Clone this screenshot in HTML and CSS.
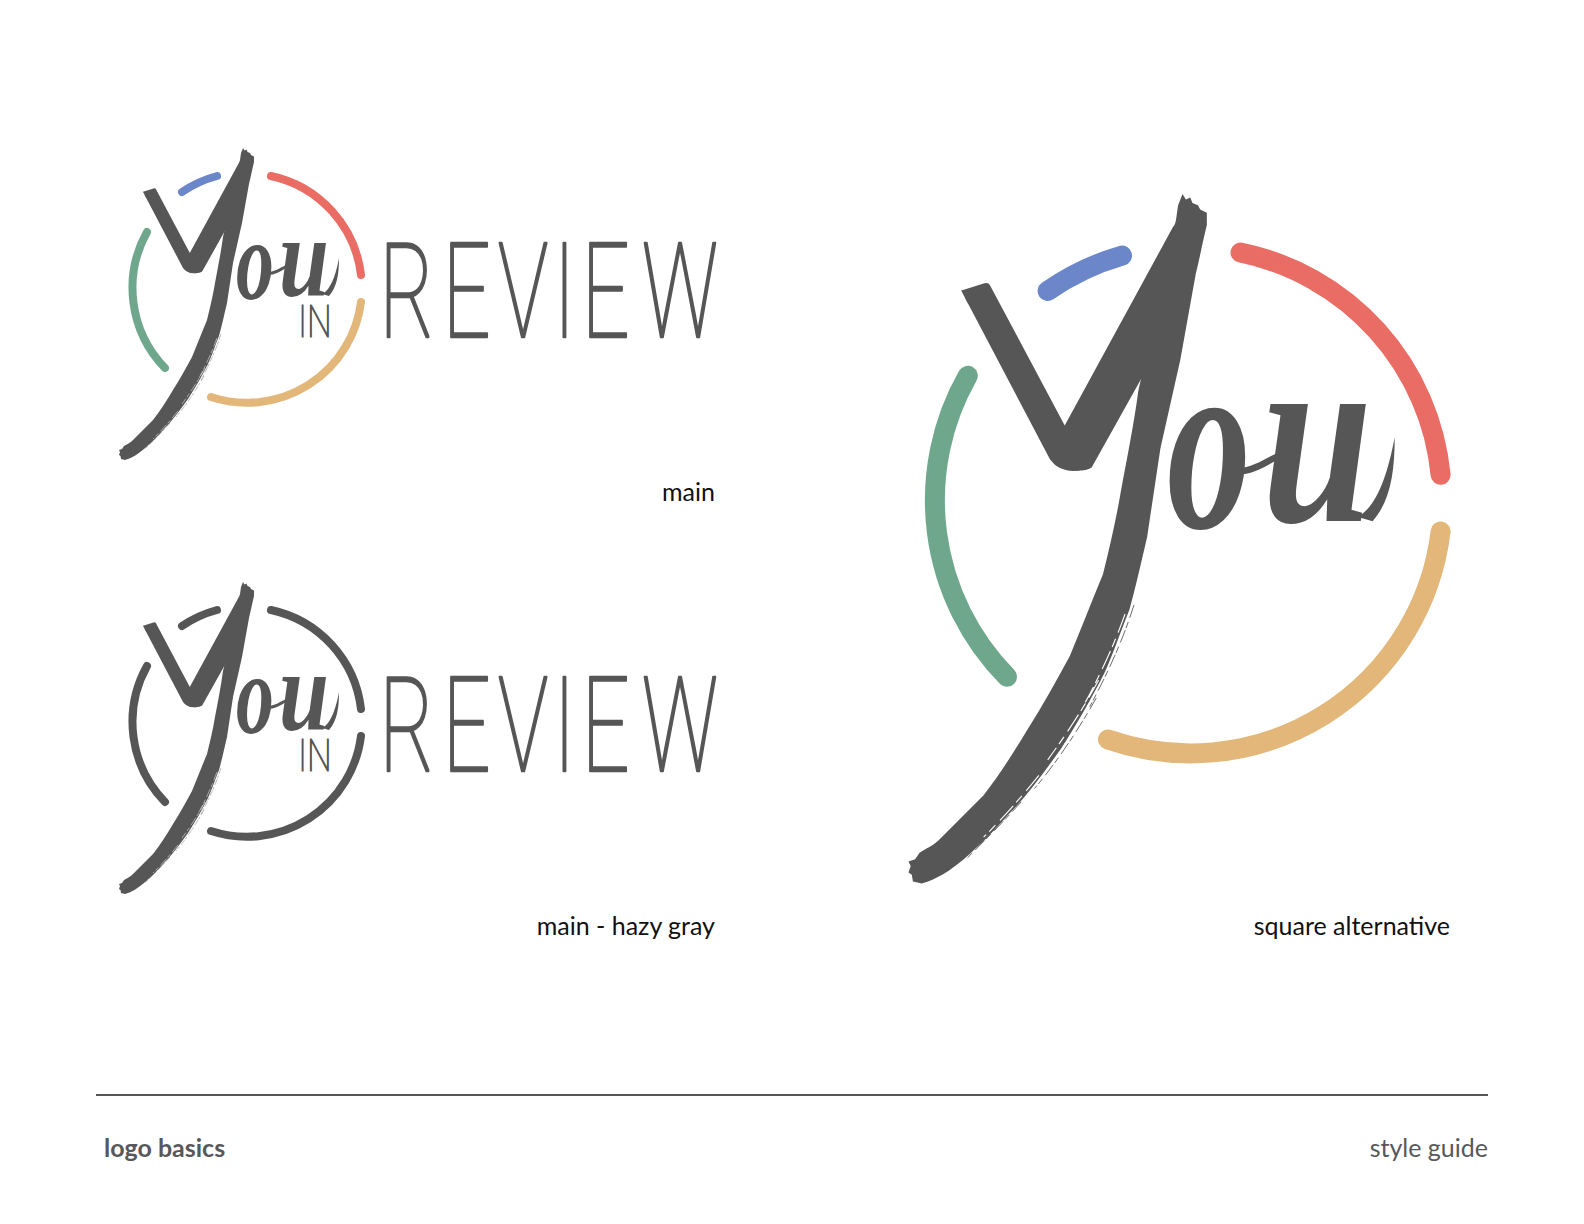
FILE: index.html
```html
<!DOCTYPE html>
<html lang="en">
<head>
<meta charset="utf-8">
<title>logo basics - style guide</title>
<link rel="stylesheet" href="styles.css">
</head>
<body>
<main class="page">
  <div class="board">
    <div class="col-left">
      <figure class="fig fig-main">
        <svg class="logo-wide" viewBox="116 140 604 325" role="img" aria-label="You in Review logo">
          <defs>
            <clipPath id="armclip1"><path d="M142 186L146 185L148 186L152 184.500L156 186L200 130H252V160L241 225L226 231L212 258C208 268 203 273 197 273C190 274 186 272 183 268L142 190Z"/></clipPath>
          </defs>
          <g class="ring thin">
            <path class="blue" d="M182 192A115 115 0 0 1 217 176"/>
            <path class="red" d="M271 176A115 115 0 0 1 361 275"/>
            <path class="gold" d="M361 302A115 115 0 0 1 211 397"/>
            <path class="green" d="M165 368A115 115 0 0 1 147 232"/>
          </g>
          <g class="mark">
            <g clip-path="url(#armclip1)"><text class="y-glyph" transform="matrix(2.107 -.667 -.248 2.49 109.700 371.700)">Y</text></g>
            <path class="swash" d="M243 148L244.500 150.500L246.500 149.500L247.500 152L250 153L251 155L254 156.500L254 162C252 170 251 176 249 184L242 223L233 263L227 303C224 316 222 325 219 336C215 346 212 355 208 364C202 376 195 388 188 399C180 410 173 420 164 429C158 436 151 443 144 449C138 454 132 458 125 460L121 459L120.500 456L119 455L120 452L119 450L122 449L124 446C127 444 130 443 133 440L153 420C160 411 167 400 173 390C180 379 186 368 192 357C197 345 202 332 207 320C210 308 213 295 215 283C218 267 221 252 223 237L225 228C228 213 230 198 233 183C235 175 238 168 240 160L241 153Z"/>
            <path class="scratch-dark" d="M221 334C216 350 209 365 201 380M204 376C196 390 187 404 176 417M170 423C162 432 153 441 145 449"/>
            <path class="scratch-light" d="M217 338C212 352 206 365 199 378M205 368C198 381 190 393 182 404M178 411C170 421 162 430 153 439"/>
            <text class="o-glyph" transform="translate(236 299) scale(.66 1)">o</text>
            <path class="swash" d="M268 272C274 272 280 268 286 265L286 268C280 272 274 275 268 275Z"/>
            <text class="u-glyph" transform="translate(279 296) scale(.78 1)">u</text>
            <path class="swash" d="M322 294C331 290 336 274 339 258C339 274 337 287 329 296Z"/>
            <text class="in-glyph" transform="translate(298 337) scale(.8 1)">IN</text>
          </g>
          <text class="review" transform="translate(0 337) scale(.64 1)" x="593 691.700 778 865 909 1003">REVIEW</text>
        </svg>
        <figcaption class="cap cap-main">main</figcaption>
      </figure>
      <figure class="fig">
        <svg class="logo-wide" viewBox="116 140 604 325" role="img" aria-label="You in Review logo, hazy gray">
          <g class="ring thin mono">
            <path d="M182 192A115 115 0 0 1 217 176"/>
            <path d="M271 176A115 115 0 0 1 361 275"/>
            <path d="M361 302A115 115 0 0 1 211 397"/>
            <path d="M165 368A115 115 0 0 1 147 232"/>
          </g>
          <g class="mark">
            <g clip-path="url(#armclip1)"><text class="y-glyph" transform="matrix(2.107 -.667 -.248 2.49 109.700 371.700)">Y</text></g>
            <path class="swash" d="M243 148L244.500 150.500L246.500 149.500L247.500 152L250 153L251 155L254 156.500L254 162C252 170 251 176 249 184L242 223L233 263L227 303C224 316 222 325 219 336C215 346 212 355 208 364C202 376 195 388 188 399C180 410 173 420 164 429C158 436 151 443 144 449C138 454 132 458 125 460L121 459L120.500 456L119 455L120 452L119 450L122 449L124 446C127 444 130 443 133 440L153 420C160 411 167 400 173 390C180 379 186 368 192 357C197 345 202 332 207 320C210 308 213 295 215 283C218 267 221 252 223 237L225 228C228 213 230 198 233 183C235 175 238 168 240 160L241 153Z"/>
            <path class="scratch-dark" d="M221 334C216 350 209 365 201 380M204 376C196 390 187 404 176 417M170 423C162 432 153 441 145 449"/>
            <path class="scratch-light" d="M217 338C212 352 206 365 199 378M205 368C198 381 190 393 182 404M178 411C170 421 162 430 153 439"/>
            <text class="o-glyph" transform="translate(236 299) scale(.66 1)">o</text>
            <path class="swash" d="M268 272C274 272 280 268 286 265L286 268C280 272 274 275 268 275Z"/>
            <text class="u-glyph" transform="translate(279 296) scale(.78 1)">u</text>
            <path class="swash" d="M322 294C331 290 336 274 339 258C339 274 337 287 329 296Z"/>
            <text class="in-glyph" transform="translate(298 337) scale(.8 1)">IN</text>
          </g>
          <text class="review" transform="translate(0 337) scale(.64 1)" x="593 691.700 778 865 909 1003">REVIEW</text>
        </svg>
        <figcaption class="cap">main - hazy gray</figcaption>
      </figure>
    </div>
    <figure class="fig fig-square">
      <svg class="logo-square" viewBox="904 185 556 700" role="img" aria-label="You logo, square alternative">
        <g class="ring thick">
          <path class="blue" d="M1047.600 291A252 252 0 0 1 1122 255.600"/>
          <path class="red" d="M1240.500 252.500A252 252 0 0 1 1440.600 474.800"/>
          <path class="gold" d="M1440.600 531.400A252 252 0 0 1 1108 739.500"/>
          <path class="green" d="M1007 676.800A252 252 0 0 1 967.800 375.800"/>
        </g>
        <g class="mark" transform="translate(645.500 -133) scale(2.21)">
          <g clip-path="url(#armclip1)"><text class="y-glyph" transform="matrix(2.107 -.667 -.248 2.49 109.700 371.700)">Y</text></g>
          <path class="swash" d="M243 148L244.500 150.500L246.500 149.500L247.500 152L250 153L251 155L254 156.500L254 162C252 170 251 176 249 184L242 223L233 263L227 303C224 316 222 325 219 336C215 346 212 355 208 364C202 376 195 388 188 399C180 410 173 420 164 429C158 436 151 443 144 449C138 454 132 458 125 460L121 459L120.500 456L119 455L120 452L119 450L122 449L124 446C127 444 130 443 133 440L153 420C160 411 167 400 173 390C180 379 186 368 192 357C197 345 202 332 207 320C210 308 213 295 215 283C218 267 221 252 223 237L225 228C228 213 230 198 233 183C235 175 238 168 240 160L241 153Z"/>
          <path class="scratch-dark" d="M221 334C216 350 209 365 201 380M204 376C196 390 187 404 176 417M170 423C162 432 153 441 145 449"/>
          <path class="scratch-light" d="M217 338C212 352 206 365 199 378M205 368C198 381 190 393 182 404M178 411C170 421 162 430 153 439"/>
          <text class="o-glyph" transform="translate(236 299) scale(.66 1)">o</text>
          <path class="swash" d="M268 272C274 272 280 268 286 265L286 268C280 272 274 275 268 275Z"/>
          <text class="u-glyph" transform="translate(279 296) scale(.78 1)">u</text>
          <path class="swash" d="M322 294C331 290 336 274 339 258C339 274 337 287 329 296Z"/>
        </g>
      </svg>
      <figcaption class="cap cap-square">square alternative</figcaption>
    </figure>
  </div>
  <footer class="foot">
    <strong class="foot-title">logo basics</strong>
    <span class="foot-label">style guide</span>
  </footer>
</main>
</body>
</html>
```
FILE: styles.css
```css
* { box-sizing: border-box; }
html, body { margin: 0; background: #fff; }
body { font-family: "Lato", "Open Sans", sans-serif; color: #111; }
.page { width: 1584px; height: 1224px; padding: 140px 96px 0; display: flex; flex-direction: column; }
.board { display: grid; grid-template-columns: 624px 556px; column-gap: 184px; }
.col-left { padding-left: 20px; display: flex; flex-direction: column; }
.fig { margin: 0; display: flex; flex-direction: column; }
.fig-main { margin-bottom: 68px; }
.fig-square { padding-top: 45px; }
.logo-wide { display: block; width: 604px; height: 325px; overflow: visible; }
.logo-square { display: block; width: 556px; height: 700px; overflow: visible; }
.cap { margin: 11px 0 0; height: 30px; font-size: 25px; line-height: 30px; text-align: right; padding-right: 5px; }
.cap-square { margin-top: 25px; padding-right: 10px; }
.ring { fill: none; stroke-linecap: round; }
.thin { stroke-width: 8; }
.thick { stroke-width: 20; }
.blue { stroke: #6b86c9; }
.red { stroke: #e96d64; }
.gold { stroke: #e2b779; }
.green { stroke: #6ea78c; }
.mono { stroke: #565656; }
.swash { fill: #565656; }
.scratch-dark { fill: none; stroke: #565656; stroke-width: .4; stroke-dasharray: 6 2 3 1; }
.scratch-light { fill: none; stroke: #fff; stroke-width: .5; stroke-dasharray: 9 3 4 2; }
.y-glyph { font-family: "Liberation Sans", sans-serif; font-size: 100px; fill: #565656; stroke: #565656; stroke-width: 3px; stroke-linejoin: round; }
.o-glyph, .u-glyph { font-family: "Liberation Serif", serif; font-style: italic; font-weight: 700; font-size: 115px; fill: #565656; }
.in-glyph { font-family: "Roboto", sans-serif; font-weight: 100; font-size: 43.6px; fill: #565656; stroke: #565656; stroke-width: 1.1px; }
.review { font-family: "Roboto", sans-serif; font-weight: 100; font-size: 131px; fill: #565656; stroke: #565656; stroke-width: 2.6px; stroke-linejoin: round; }
.foot { margin-top: 154px; border-top: 2px solid #565656; display: flex; justify-content: space-between; padding: 36px 0 0 8px; font-size: 25px; line-height: 30px; color: #58585a; }
.foot-title { font-weight: 700; }
.foot-label { font-weight: 400; }
```
